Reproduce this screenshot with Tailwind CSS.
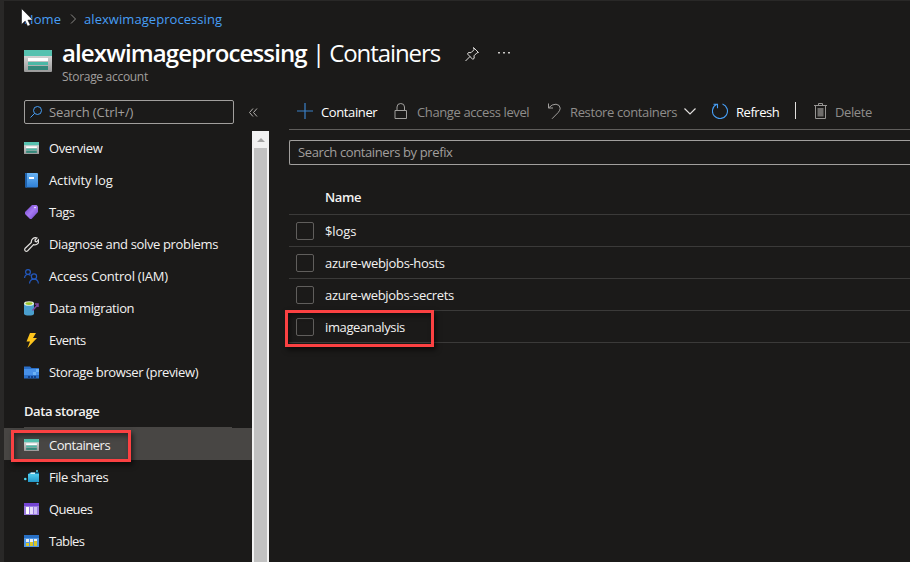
<!DOCTYPE html>
<html lang="en">
<head>
<meta charset="utf-8">
<title>alexwimageprocessing | Containers</title>
<script src="https://cdn.jsdelivr.net/npm/@tailwindcss/browser@4"></script>
</head>
<body class="relative flex h-[562px] w-[910px] overflow-hidden border-l-4 border-t border-[#292827] bg-[#1b1a19] font-['Open_Sans','Noto_Sans',sans-serif] text-[13px] leading-4 tracking-[-0.38px] text-[#f3f2f1] whitespace-nowrap">
<svg class="absolute size-0">
  <defs>
    <linearGradient id="gray" x2="0" y2="1"><stop stop-color="#e8e8e8"/><stop offset="1" stop-color="#999"/></linearGradient>
    <linearGradient id="blue" x2="0" y2="1"><stop stop-color="#6ab4f5"/><stop offset="1" stop-color="#2e7fd6"/></linearGradient>
    <linearGradient id="purple" x2="1" y2="1"><stop stop-color="#6c40c4"/><stop offset=".5" stop-color="#a67af4"/><stop offset="1" stop-color="#6c40c4"/></linearGradient>
    <linearGradient id="cyan" x2="0" y2="1"><stop stop-color="#50cdee"/><stop offset="1" stop-color="#2398c9"/></linearGradient>
  </defs>
  <symbol id="storage" viewBox="0 0 28 22" preserveAspectRatio="none"><rect width="28" height="22" rx="1" fill="url(#gray)"/><path fill="#56c2b0" d="M0 1q0-1 1-1h26q1 0 1 1v5H0z"/><path fill="#fff" d="M4 8h20v3H4z"/><path fill="#4cb8a6" d="M4 12h20v3H4z"/><path fill="#35887b" d="M4 16h20v4H4z"/></symbol>
</svg>

<div class="flex w-full flex-col">
  <nav class="flex h-[37px] items-center pb-[2px] pl-[20px] text-[#479ef5]">
    <span class="w-[46px] tracking-[0.1px]">Home</span>
    <svg class="mr-[7px] h-[10px] w-[7px]" viewBox="0 0 7 10" fill="none" stroke="#8a8886"><path d="M1 .5 5.5 5 1 9.500"/></svg>
    <span class="tracking-[0.06px]">alexwimageprocessing</span>
  </nav>

  <header class="flex h-[53px] pl-[20px]">
    <svg class="mt-[12px] mr-[10px] h-[22px] w-[28px]"><use href="#storage"/></svg>
    <div class="w-[378px]">
      <h1 class="flex h-[30px] items-center pb-px text-[24px] leading-[30px] text-white"><b class="w-[250px] font-semibold tracking-[-0.87px]">alexwimageprocessing</b><span class="tracking-[-1.08px]">| Containers</span></h1>
      <p class="mt-[1px] text-[12px] text-[#a19f9d] tracking-[-0.3px]">Storage account</p>
    </div>
    <svg class="mt-[8px] ml-[24px] size-[16px]" viewBox="0 0 16 16" fill="none" stroke="#e1dfdd"><path d="m9.500 1.500 5 5-1.500.3-3 3 .2 2.500-1.500 1L3.500 8l1-1.500 2.500.2 3-3zM6 10.500l-4.500 4.500"/></svg>
    <svg class="mt-[14px] ml-[18px] h-[2px] w-[12px]" fill="#c8c6c4"><path d="M0 0h2v1.500H0zM5 0h2v1.500H5zM10 0h2v1.500h-2z"/></svg>
  </header>

  <div class="flex min-h-0 flex-1">
    <aside class="flex w-[265px] shrink-0 flex-col">
      <div class="flex h-[40px] pl-[20px] pt-[9px]">
        <div class="flex h-[24px] w-[210px] items-center rounded-[2px] border border-[#a19f9d] pb-px pl-[5px] text-[#a19f9d]">
          <svg class="mr-[7px] size-[12px]" viewBox="0 0 12 12" fill="none" stroke="#479ef5"><circle cx="7.500" cy="4.500" r="4"/><path d="M4.500 7.500 .5 11.500"/></svg>
          <span class="tracking-[-0.1px]">Search (Ctrl+/)</span>
        </div>
        <svg class="mt-[8px] ml-[15px] size-[9px]" viewBox="0 0 9 9" fill="none" stroke="#b3b0ad"><path d="M4 .5.5 4.500l3.500 4M8 .5l-3.500 4 3.500 4"/></svg>
      </div>
      <div class="flex min-h-0 flex-1">
        <ul class="w-[248px] pt-px [&>li]:flex [&>li]:h-8 [&>li]:items-center [&>li]:pl-[20px] [&_svg]:mr-[10px] [&_svg]:h-[15px] [&_svg]:w-[15px] [&_svg]:shrink-0">
          <li><svg viewBox="0 0 15 15"><use href="#storage" y="1" width="15" height="12"/></svg><span>Overview</span></li>
          <li><svg viewBox="0 0 15 15"><rect x="1" width="13" height="14.500" rx="1" fill="url(#blue)"/><path fill="#1f62ad" d="M1 1q0-1 1-1h1v14.500H2q-1 0-1-1z"/><path fill="#fff" d="M5 4h5v2H5z"/></svg><span class="tracking-[-0.1px]">Activity log</span></li>
          <li><svg viewBox="0 0 15 15"><path fill="url(#purple)" d="M8 0h4.500L14 1.500V7l-6.500 7H6L1 9V7z"/><circle cx="11" cy="2.500" r=".8" fill="#fff"/></svg><span class="tracking-[-0.6px]">Tags</span></li>
          <li><svg viewBox="0 0 15 15" fill="none" stroke="#e1dfdd" stroke-width="1.200"><path d="M9 1.500q2-1.500 4-.5L11 3l.3 1.400 1.400.4 1.800-2q.7 2.200-.8 3.900T9.500 7.700L3.500 14q-1.300.8-2.300-.2T1 11.500l6.300-6Q7 3 9 1.500z"/></svg><span class="tracking-[-0.35px]">Diagnose and solve problems</span></li>
          <li><svg viewBox="0 0 15 15" fill="none" stroke="#2358bd" stroke-width="1.200"><circle cx="4" cy="3" r="2.400"/><circle cx="10" cy="7.500" r="2.600"/><path d="M.6 9q.2-3.500 3.400-3.500 1.500 0 2.500 1M5.500 14.500Q6 10.200 10 10.200t4.400 4.300"/></svg><span class="tracking-[-0.22px]">Access Control (IAM)</span></li>
          <li><svg viewBox="0 0 15 15"><path fill="#4a9fce" d="M0 2.500h10V13q-1 1.500-5 1.500T0 13z"/><ellipse cx="5" cy="2.500" rx="5" ry="2.300" fill="#e8f3e0"/><ellipse cx="5" cy="2.600" rx="3.600" ry="1.400" fill="#9bc52a"/><path stroke="#7b479f" stroke-width="1.500" fill="none" d="M8.500 9.500l5-5.500M11 3h3v3"/></svg><span>Data migration</span></li>
          <li><svg viewBox="0 0 15 15"><path fill="#fdc41c" d="M6 0h6L9 5h4L3.500 15 6 8.500H2.500z"/></svg><span class="tracking-[-0.5px]">Events</span></li>
          <li><svg viewBox="0 0 15 15"><path fill="#2a6fc9" d="M0 1.500h6L7.500 3H15v10.500H0z"/><path fill="#4790e8" d="M0 4h15v6H0z"/><path fill="#6cb1f3" d="M12 4h3v3h-3zM9 7h3v3H9z"/><path fill="#123f86" d="M4 11h2v2H4zM7 11h2v2H7zM10 11h2v2h-2z"/></svg><span>Storage browser (preview)</span></li>
          <li class="!h-[40px] relative pt-[5px] font-semibold after:absolute after:bottom-0 after:left-[20px] after:h-px after:w-[208px] after:bg-[#484644]"><span class="tracking-[-0.42px]">Data storage</span></li>
          <li class="bg-[#484644] pt-[2px]"><svg viewBox="0 0 15 15"><use href="#storage" y="1" width="15" height="12"/></svg><span class="tracking-[-0.48px]">Containers</span></li>
          <li class="pt-[2px]"><svg viewBox="0 0 15 15"><path fill="url(#cyan)" d="M4 4h11v8H4z"/><path fill="#1683b5" d="M6 2.500h9V4H4z"/><path fill="#d6f2fa" d="M7 2.500h4V4H6z"/><circle cx="1.300" cy="9" r="1.300" fill="#50d5ef"/><circle cx="13" cy="1" r="1" fill="#50d5ef"/><circle cx="13.500" cy="13.700" r="1" fill="#50d5ef"/></svg><span class="tracking-[-0.45px]">File shares</span></li>
          <li class="pt-[2px]"><svg viewBox="0 0 15 15"><path fill="#9a7be0" d="M0 1h15v12H0z"/><path fill="#7444d4" d="M0 1h15v3H0z"/><path fill="#fff" d="M2 5h3v7H2z"/><path fill="#e5dcfa" d="M6 5h3v7H6z"/><path fill="#cfbff5" d="M10 5h3v7h-3z"/></svg><span class="tracking-[-0.6px]">Queues</span></li>
          <li class="pt-[2px]"><svg viewBox="0 0 15 15"><path fill="#4f96e6" d="M0 1h15v12H0z"/><path fill="#2870c5" d="M0 1h15v3H0z"/><path fill="#e9eef3" d="M2 5h3v3H2zM6 5h3v3H6zM10 5h3v3h-3z"/><path fill="#d8c52b" d="M2 9h3v3H2zM6 8h3v4H6zM10 7h3v5h-3z"/></svg><span class="tracking-[-0.65px]">Tables</span></li>
        </ul>
        <div class="flex w-[17px] flex-col items-center bg-[#f1f1f1]">
          <svg class="h-[17px] w-[8px] shrink-0" viewBox="0 0 8 17" fill="#a3a3a3"><path d="M0 11l4-4 4 4z"/></svg>
          <div class="w-[13px] flex-1 bg-[#c1c1c1]"></div>
        </div>
      </div>
    </aside>

    <main class="ml-[20px] min-w-0 flex-1">
      <div class="flex h-[39px] items-center border-b border-[#605e5c] pt-[3px] text-[#8f8d8b]">
        <div class="flex w-[98px] items-center pl-[8px] text-white">
          <svg class="mr-[8px] size-[16px] -mt-px" viewBox="0 0 16 16" stroke="#3b80c8" stroke-width="1.200"><path d="M8 0v16M0 8h16"/></svg><span>Container</span>
        </div>
        <div class="flex w-[161px] items-center pl-[7px]">
          <svg class="mr-[9px] h-[16px] w-[14px] -mt-px" viewBox="0 0 14 16" fill="none" stroke="#a19f9d"><path d="M1 7.500h11.500v8H1zM3 7.500V4q0-3.500 3.750-3.500T10.500 4v3.500"/></svg><span>Change access level</span>
        </div>
        <div class="flex w-[164px] items-center">
          <svg class="mr-[9px] h-[16px] w-[13px] -mt-px" viewBox="0 0 13 16" fill="none" stroke="#a19f9d"><path d="M.5.500V5H5M.7 4.800Q4 1 8 1.200q4 .5 4.200 4 0 2-2 4.300L4 15.800"/></svg><span class="w-[114px]">Restore containers</span>
          <svg class="h-[7px] w-[12px]" viewBox="0 0 12 7" fill="none" stroke="#e1dfdd" stroke-width="1.200"><path d="m.5.500 5.500 5.500L11.500.500"/></svg>
        </div>
        <div class="flex w-[83px] items-center text-white">
          <svg class="mr-[8px] size-[16px] -mt-[2px]" viewBox="0 0 16 16" fill="none" stroke="#479ef5" stroke-width="1.100"><path d="M10.500 1A7.500 7.500 0 1 1 4.700 1.300M1.500 1.300h4v4"/></svg><span class="tracking-[-0.45px]">Refresh</span>
        </div>
        <div class="mr-[18px] -mt-[2px] h-[17px] w-px bg-[#e1dfdd]"></div>
        <svg class="mr-[8px] h-[16px] w-[13px] -mt-px" viewBox="0 0 13 16" fill="none" stroke="#979593"><path d="M0 2.500h13M4.500 2.500v-2h4v2M1.500 2.500v13h10v-13"/><path fill="#6f6d6b" stroke="none" d="M3.500 5h6v8.500h-6z"/></svg><span>Delete</span>
      </div>
      <div class="mt-[10px] flex h-[25px] items-center rounded-l-[2px] border border-r-0 border-[#a19f9d] pb-[2px] pl-[8px] text-[#a19f9d]">Search containers by prefix</div>
      <div class="flex h-[50px] items-end border-b border-[#3b3a39] pb-[9px] pl-[36px] font-semibold">Name</div>
      <ul class="[&>li]:flex [&>li]:h-8 [&>li]:items-center [&>li]:border-b [&>li]:border-[#3b3a39] [&>li]:pl-[7px] [&_i]:mr-[11px] [&_i]:size-[18px] [&_i]:rounded-[2px] [&_i]:border [&_i]:border-[#605e5c]">
        <li><i></i><span class="tracking-[-0.1px]">$logs</span></li>
        <li><i></i><span class="tracking-[-0.32px]">azure-webjobs-hosts</span></li>
        <li><i></i><span class="tracking-[-0.34px]">azure-webjobs-secrets</span></li>
        <li><i></i><span>imageanalysis</span></li>
      </ul>
    </main>
  </div>
</div>

<div class="absolute top-[429px] left-[7px] h-[32px] w-[120px] border-3 border-[#fb4142] shadow-[2px_3px_5px_rgba(0,0,0,.6),inset_2px_3px_5px_rgba(0,0,0,.45)]"></div>
<div class="absolute top-[309px] left-[281px] h-[37px] w-[149px] border-3 border-[#fb4142] shadow-[2px_3px_5px_rgba(0,0,0,.6),inset_2px_3px_5px_rgba(0,0,0,.45)]"></div>
<svg class="absolute top-[7px] left-[17px] h-[19px] w-[12px]" viewBox="0 0 12 19"><path fill="#fff" stroke="#111" stroke-width=".6" d="M.5.500v16l3.700-3.400 2.400 5.200 2.700-1.200-2.400-5h5z"/></svg>
</body>
</html>
